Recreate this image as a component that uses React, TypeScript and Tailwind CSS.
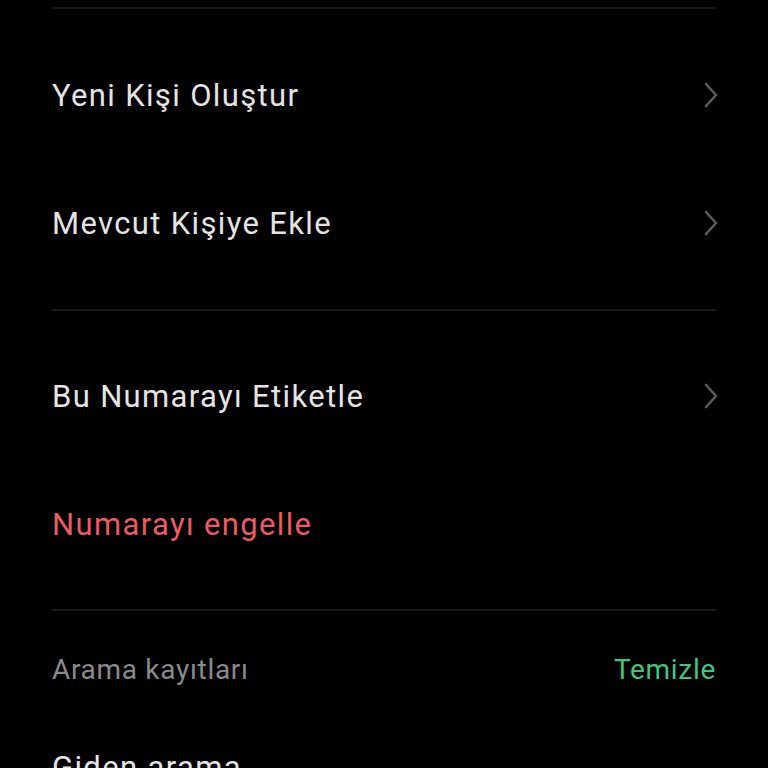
import React from 'react';

const font = { fontFamily: 'Roboto, "Noto Sans", sans-serif' };

function Chevron() {
  return (
    <svg width="14" height="26" viewBox="0 0 14 26" fill="none" className="mr-[-2px]">
      <path d="M2 2 L12 13 L2 24" stroke="#5c5c5c" strokeWidth="2.6" strokeLinecap="round" strokeLinejoin="round" />
    </svg>
  );
}

function Divider() {
  return <div className="h-[2px] bg-[#1a1a1a]" />;
}

function Row({ label, color = 'text-[#e4e4e4]', arrow = true }: { label: string; color?: string; arrow?: boolean }) {
  return (
    <div className="h-[128px] flex items-center justify-between">
      <span className={`text-[31px] tracking-[1.35px] leading-none ${color}`}>{label}</span>
      {arrow && <Chevron />}
    </div>
  );
}

export default function App() {
  return (
    <div className="w-[768px] h-[768px] overflow-hidden bg-black px-[52px] pt-[7px]" style={font}>
      <Divider />
      <div className="py-[22px]">
        <Row label="Yeni Kişi Oluştur" />
        <Row label="Mevcut Kişiye Ekle" />
      </div>
      <Divider />
      <div className="py-[21px]">
        <Row label="Bu Numarayı Etiketle" />
        <Row label="Numarayı engelle" color="text-[#ec5a63]" arrow={false} />
      </div>
      <Divider />
      <div className="h-[118px] flex items-center justify-between">
        <span className="text-[28px] tracking-[0.7px] leading-none text-[#8a8a8a]">Arama kayıtları</span>
        <span className="text-[28px] tracking-[0.7px] leading-none text-[#3fc67e]">Temizle</span>
      </div>
      <div className="h-[76px] flex items-center">
        <span className="text-[31px] tracking-[1.35px] leading-none text-[#e4e4e4]">Giden arama</span>
      </div>
    </div>
  );
}
